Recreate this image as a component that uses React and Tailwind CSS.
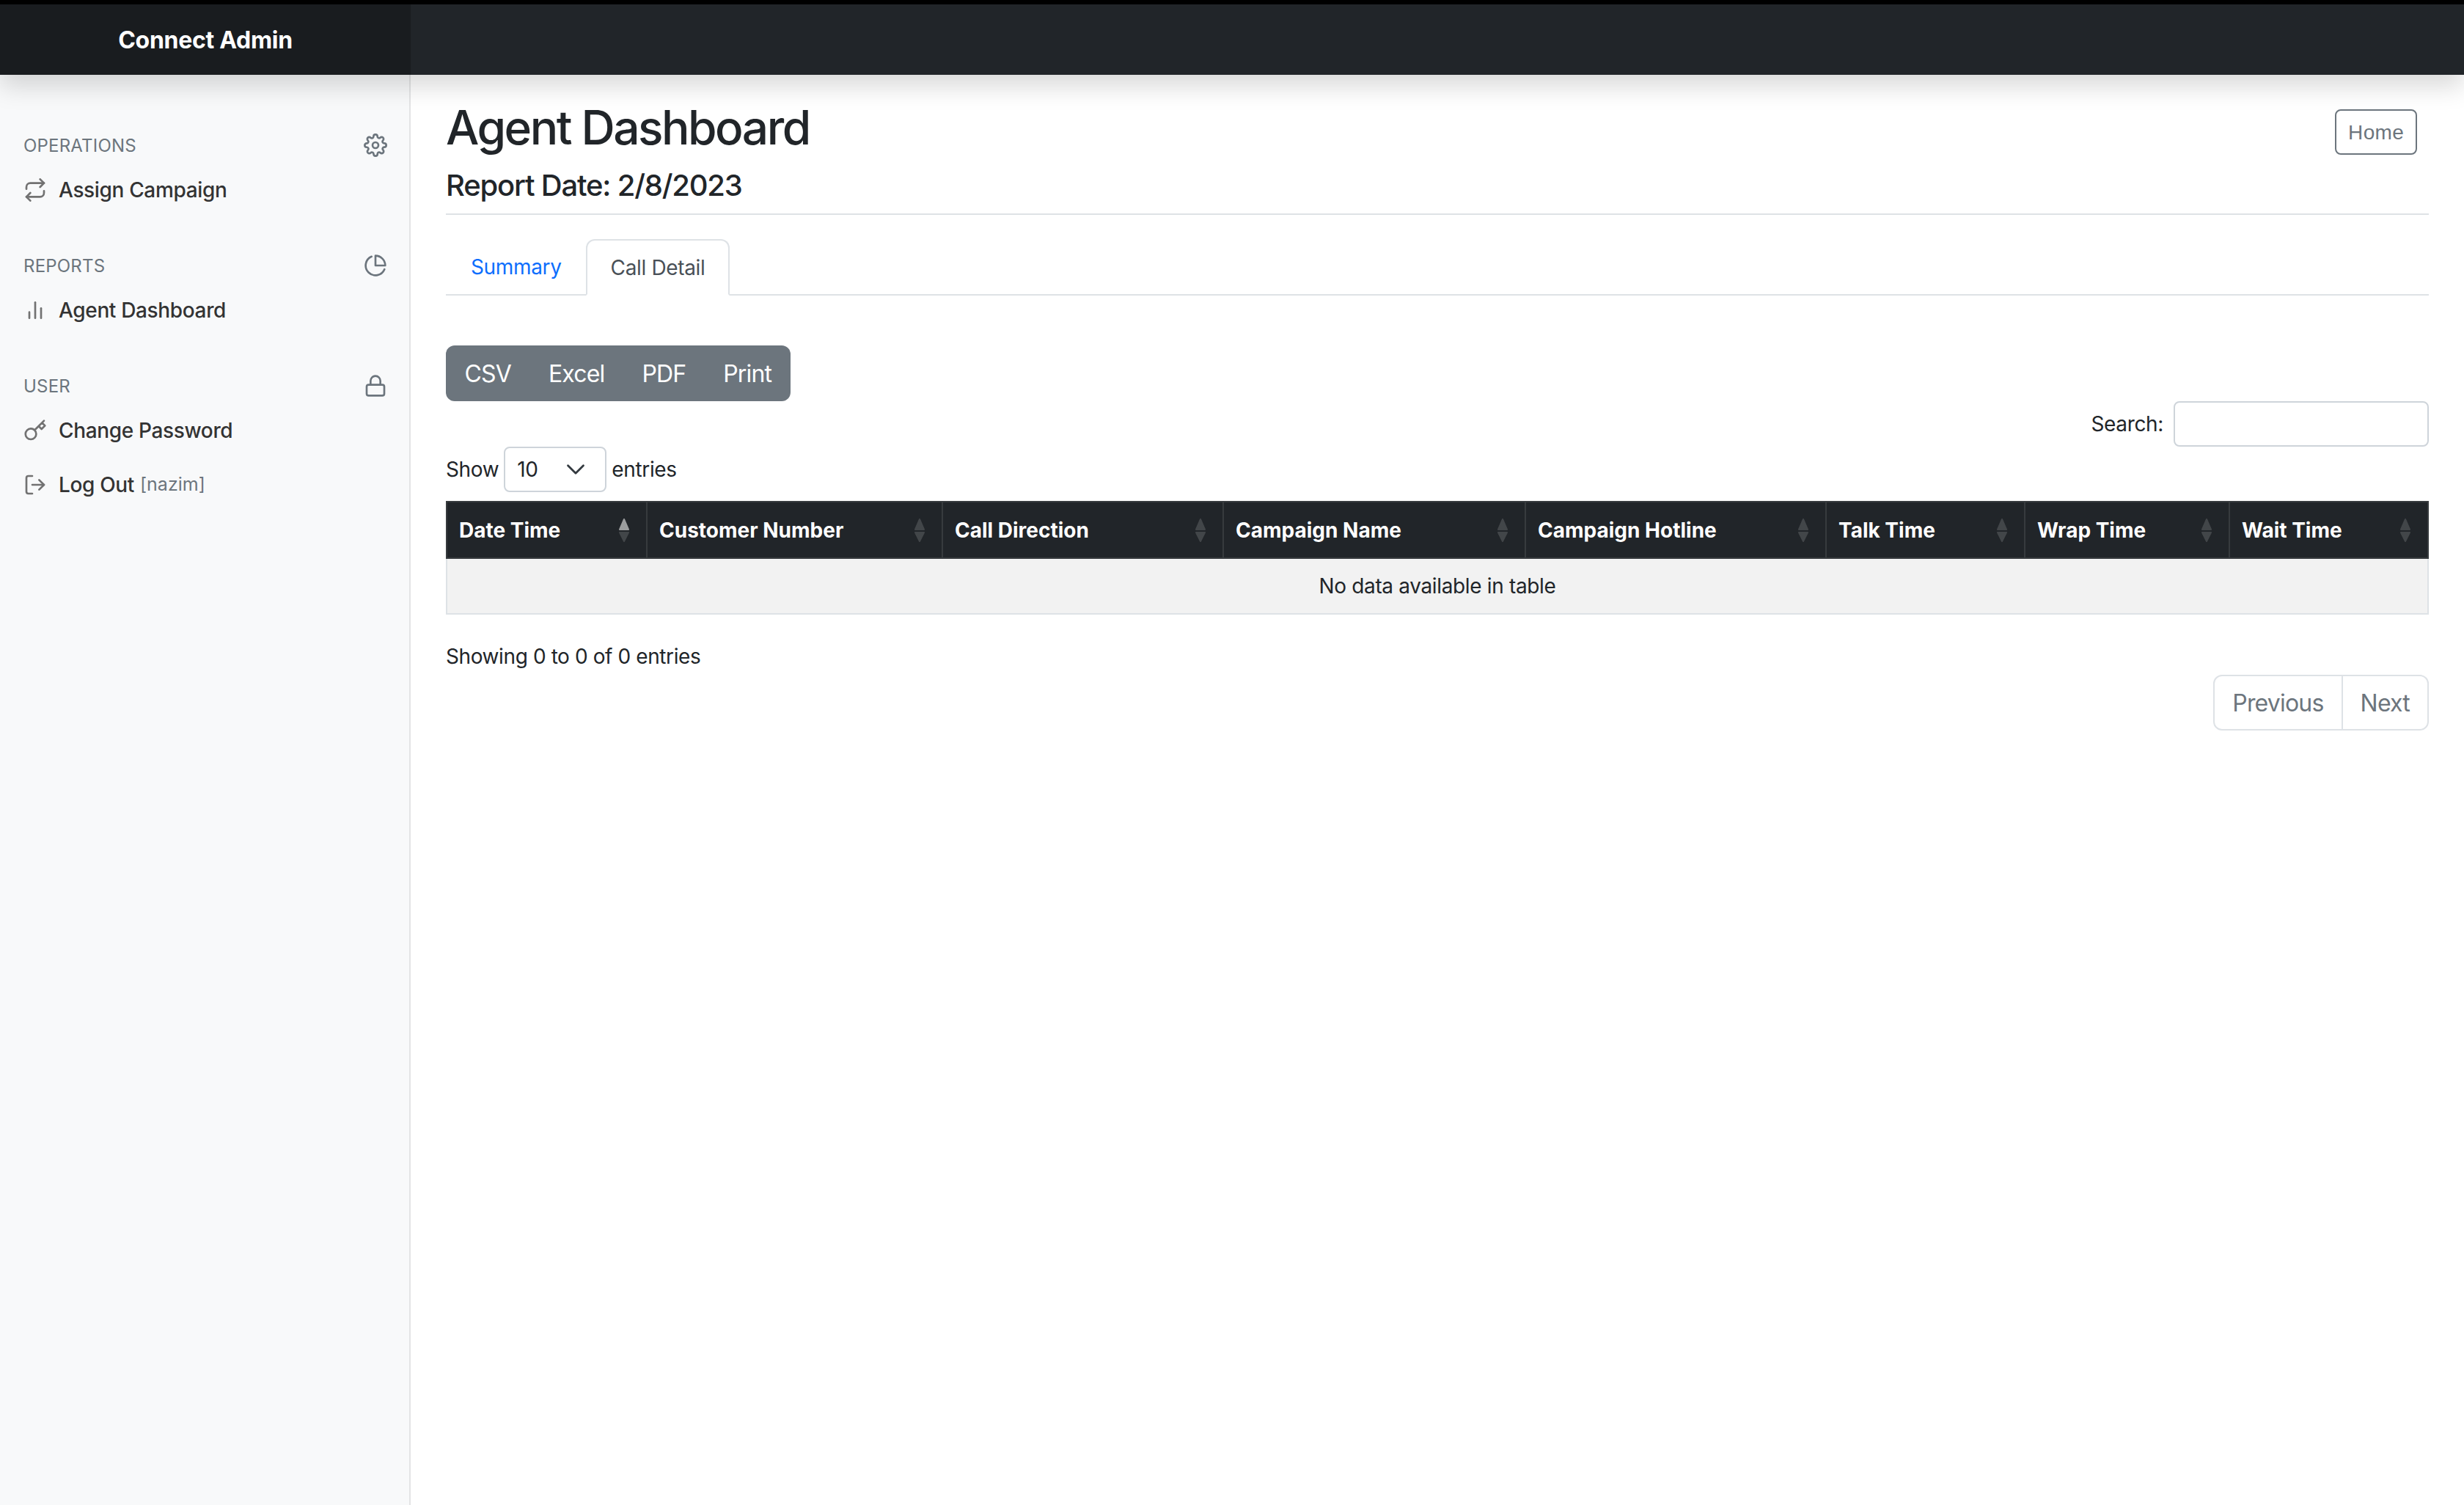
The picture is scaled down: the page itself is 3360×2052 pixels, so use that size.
import React from 'react';
import { FiSettings, FiRepeat, FiPieChart, FiBarChart2, FiLock, FiKey, FiLogOut } from 'react-icons/fi';

const sections = [
  {
    title: 'Operations',
    icon: FiSettings,
    links: [{ label: 'Assign Campaign', icon: FiRepeat }],
  },
  {
    title: 'Reports',
    icon: FiPieChart,
    links: [{ label: 'Agent Dashboard', icon: FiBarChart2 }],
  },
  {
    title: 'User',
    icon: FiLock,
    links: [
      { label: 'Change Password', icon: FiKey },
      { label: 'Log Out', icon: FiLogOut, note: '[nazim]' },
    ],
  },
];

const columns = [
  { label: 'Date Time', width: 'w-[273px]', active: true },
  { label: 'Customer Number', width: 'w-[403px]' },
  { label: 'Call Direction', width: 'w-[383px]' },
  { label: 'Campaign Name', width: 'w-[412px]' },
  { label: 'Campaign Hotline', width: 'w-[410px]' },
  { label: 'Talk Time', width: 'w-[271px]' },
  { label: 'Wrap Time', width: 'w-[279px]' },
  { label: 'Wait Time', width: 'w-[271px]' },
];

const SortArrows = ({ active }) => (
  <svg width="16" height="34" viewBox="0 0 16 34" className="shrink-0" fill="#ffffff" stroke="#ffffff" strokeWidth="2" strokeLinejoin="round">
    <polygon points="8,2 14,16 2,16" opacity={active ? 0.55 : 0.15} />
    <polygon points="8,32 14,20 2,20" opacity="0.15" />
  </svg>
);

const Sidebar = () => (
  <aside className="w-[560px] shrink-0 bg-[#f8f9fa] border-r-2 border-[#e3e4e5] pt-[30px]">
    {sections.map((section) => (
      <div key={section.title} className="mt-[49px]">
        <div className="h-[34px] mb-[7px] pl-[32px] pr-[30px] flex items-center justify-between text-[24px] tracking-[0.2px] uppercase text-[#6c757d]">
          <span className="pt-[2px]">{section.title}</span>
          <section.icon className="w-[32px] h-[32px]" />
        </div>
        {section.links.map((link) => (
          <a key={link.label} className="h-[74px] px-[32px] flex items-center text-[28px] font-medium tracking-[-0.35px] text-[#333333]">
            <link.icon className="w-[32px] h-[32px] mr-[16px] text-[#727272]" />
            <span>{link.label}</span>
            {link.note && <span className="ml-[8px] text-[25px] font-normal tracking-normal text-[#6c757d]">{link.note}</span>}
          </a>
        ))}
      </div>
    ))}
  </aside>
);

export default function App() {
  return (
    <div className="min-h-screen flex flex-col bg-white text-[#212529] font-['Inter',sans-serif]">
      <header className="relative z-10 h-[102px] shrink-0 border-t-[6px] border-black bg-[#212529] flex shadow-[0_16px_32px_rgba(0,0,0,0.15)]">
        <div className="w-[560px] pt-[1px] bg-[#191c1f] flex items-center justify-center text-[32px] font-bold tracking-[-0.3px] text-white">
          Connect Admin
        </div>
      </header>

      <div className="flex flex-1">
        <Sidebar />

        <main className="flex-1 min-w-0 px-[48px] pt-[33px]">
          <div className="flex justify-between border-b-2 border-[#dee2e6] pb-[14px]">
            <div>
              <h1 className="text-[64px] leading-[77px] font-medium tracking-[-2.5px]">Agent Dashboard</h1>
              <h2 className="mt-[17px] text-[40px] leading-[48px] font-medium tracking-[-1.2px]">Report Date: 2/8/2023</h2>
            </div>
            <button className="mt-[14px] mr-[16px] h-[62px] px-[16px] pt-[1px] border-2 border-[#6c757d] rounded-[8px] text-[28px] tracking-[0.3px] text-[#6c757d] font-['Liberation_Sans',sans-serif]">
              Home
            </button>
          </div>

          <div className="mt-[33px] flex border-b-2 border-[#dee2e6] h-[77px] text-[28px] tracking-[-0.35px]">
            <a className="w-[191px] px-[34px] flex items-center text-[#0d6efd]">Summary</a>
            <a className="w-[196px] h-[77px] px-[30px] flex items-center justify-center whitespace-nowrap border-2 border-b-white border-[#dee2e6] rounded-t-[12px] bg-white text-[#495057]">
              Call Detail
            </a>
          </div>

          <div className="mt-[68px] inline-flex h-[76px] rounded-[12px] bg-[#6c757d] text-[32px] tracking-[-0.85px] text-white">
            {['CSV', 'Excel', 'PDF', 'Print'].map((label) => (
              <button key={label} className="px-[25.5px] pt-[2px]">{label}</button>
            ))}
          </div>

          <div className="flex justify-end items-center gap-[14px] text-[28px] tracking-[-0.35px] h-[62px]">
            <label>Search:</label>
            <input className="w-[348px] h-[62px] border-2 border-[#ced4da] rounded-[8px] bg-white" />
          </div>

          <div className="flex items-center h-[62px] text-[28px] tracking-[-0.35px]">
            <span>Show</span>
            <div className="relative mx-[7px]">
              <select className="w-[140px] h-[62px] pl-[16px] border-2 border-[#ced4da] rounded-[8px] bg-white appearance-none">
                <option>10</option>
              </select>
              <svg viewBox="0 0 16 16" className="absolute right-[28px] top-[17px] w-[28px] h-[28px]" fill="none" stroke="#343a40" strokeWidth="1.6" strokeLinecap="round" strokeLinejoin="round">
                <path d="M2 5l6 6 6-6" />
              </svg>
            </div>
            <span>entries</span>
          </div>

          <table className="mt-[12px] w-full table-fixed border-collapse text-[28px]">
            <thead>
              <tr className="bg-[#212529] text-white">
                {columns.map((col) => (
                  <th key={col.label} className={`${col.width} h-[77px] border-2 border-[#373b3e] pl-[16px] pr-[22px] font-bold text-left`}>
                    <div className="flex items-center justify-between">
                      <span>{col.label}</span>
                      <SortArrows active={col.active} />
                    </div>
                  </th>
                ))}
              </tr>
            </thead>
            <tbody>
              <tr className="bg-[#f2f2f2]">
                <td colSpan={8} className="h-[76px] border-2 border-[#dee2e6] text-center tracking-[-0.35px]">No data available in table</td>
              </tr>
            </tbody>
          </table>

          <div className="mt-[36px] text-[28px] leading-[42px] tracking-[-0.4px]">Showing 0 to 0 of 0 entries</div>

          <div className="mt-[4px] flex justify-end">
            <div className="flex h-[76px] border-2 border-[#dee2e6] rounded-[12px] text-[32px] tracking-[-0.8px] text-[#6c757d]">
              <a className="px-[24px] pt-[1px] flex items-center border-r-2 border-[#dee2e6]">Previous</a>
              <a className="px-[24px] pt-[1px] flex items-center">Next</a>
            </div>
          </div>
        </main>
      </div>
    </div>
  );
}
